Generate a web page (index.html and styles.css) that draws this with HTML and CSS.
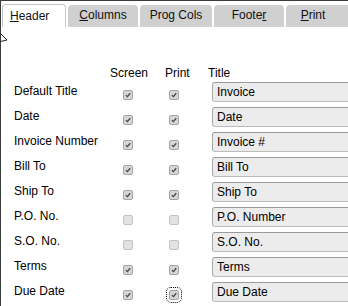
FILE: index.html
```html
<!DOCTYPE html>
<html>
<head>
<meta charset="utf-8">
<link rel="stylesheet" href="styles.css">
</head>
<body>
<div class="window">
  <div class="tabs">
    <div class="tab active"><u>H</u>eader</div>
    <div class="tab w70"><u>C</u>olumns</div>
    <div class="tab w72">Prog Cols</div>
    <div class="tab w70">Foote<u>r</u></div>
    <div class="tab grow"><u>P</u>rint</div>
  </div>
  <svg class="cursor" width="9" height="10" viewBox="0 0 9 10"><polygon points="0.5,0.5 7,7 0.5,8.5" fill="#fff" stroke="#222" stroke-width="1"/></svg>
  <div class="head">
    <span class="h-screen">Screen</span>
    <span class="h-print">Print</span>
    <span>Title</span>
  </div>
  <div class="rows">
    <div class="row"><span class="label">Default Title</span><span class="cb on"><svg viewBox="0 0 10 10"><path d="M2.3 5.2 L4.2 7 L7.8 2.8"/></svg></span><span class="cb on p"><svg viewBox="0 0 10 10"><path d="M2.3 5.2 L4.2 7 L7.8 2.8"/></svg></span><span class="field">Invoice</span></div>
    <div class="row"><span class="label">Date</span><span class="cb on"><svg viewBox="0 0 10 10"><path d="M2.3 5.2 L4.2 7 L7.8 2.8"/></svg></span><span class="cb on p"><svg viewBox="0 0 10 10"><path d="M2.3 5.2 L4.2 7 L7.8 2.8"/></svg></span><span class="field">Date</span></div>
    <div class="row"><span class="label">Invoice Number</span><span class="cb on"><svg viewBox="0 0 10 10"><path d="M2.3 5.2 L4.2 7 L7.8 2.8"/></svg></span><span class="cb on p"><svg viewBox="0 0 10 10"><path d="M2.3 5.2 L4.2 7 L7.8 2.8"/></svg></span><span class="field">Invoice #</span></div>
    <div class="row"><span class="label">Bill To</span><span class="cb on"><svg viewBox="0 0 10 10"><path d="M2.3 5.2 L4.2 7 L7.8 2.8"/></svg></span><span class="cb on p"><svg viewBox="0 0 10 10"><path d="M2.3 5.2 L4.2 7 L7.8 2.8"/></svg></span><span class="field">Bill To</span></div>
    <div class="row"><span class="label">Ship To</span><span class="cb on"><svg viewBox="0 0 10 10"><path d="M2.3 5.2 L4.2 7 L7.8 2.8"/></svg></span><span class="cb on p"><svg viewBox="0 0 10 10"><path d="M2.3 5.2 L4.2 7 L7.8 2.8"/></svg></span><span class="field">Ship To</span></div>
    <div class="row"><span class="label">P.O. No.</span><span class="cb"></span><span class="cb p"></span><span class="field">P.O. Number</span></div>
    <div class="row"><span class="label">S.O. No.</span><span class="cb"></span><span class="cb p"></span><span class="field">S.O. No.</span></div>
    <div class="row"><span class="label">Terms</span><span class="cb on"><svg viewBox="0 0 10 10"><path d="M2.3 5.2 L4.2 7 L7.8 2.8"/></svg></span><span class="cb on p"><svg viewBox="0 0 10 10"><path d="M2.3 5.2 L4.2 7 L7.8 2.8"/></svg></span><span class="field">Terms</span></div>
    <div class="row"><span class="label">Due Date</span><span class="cb on"><svg viewBox="0 0 10 10"><path d="M2.3 5.2 L4.2 7 L7.8 2.8"/></svg></span><span class="cb on p focus"><svg viewBox="0 0 10 10"><path d="M2.3 5.2 L4.2 7 L7.8 2.8"/></svg></span><span class="field">Due Date</span></div>
  </div>
</div>
</body>
</html>
```

FILE: styles.css
```css
html, body {
  margin: 0;
  padding: 0;
  background: #fff;
}
body {
  width: 348px;
  height: 306px;
  overflow: hidden;
  font-family: "Liberation Sans", Arial, sans-serif;
  font-size: 12px;
  color: #000;
}
.window {
  position: relative;
  box-sizing: border-box;
  width: 348px;
  height: 306px;
  overflow: hidden;
  border-top: 1px solid #3c3c3c;
  border-left: 1px solid #3c3c3c;
}
.tabs {
  display: flex;
  align-items: flex-end;
  gap: 2px;
  height: 26px;
  padding-left: 1px;
  white-space: nowrap;
}
.tab {
  flex: none;
  box-sizing: border-box;
  height: 22px;
  line-height: 21px;
  text-align: center;
  color: #111;
  background: #d0d0d0;
  border-radius: 4px 4px 0 0;
}
.tab.active {
  width: 64px;
  height: 23px;
  line-height: 22px;
  background: #fff;
  border: 1px solid #c4c4c4;
  border-bottom: none;
  text-align: left;
  padding-left: 7px;
}
.w70 { width: 70px; }
.w72 { width: 72px; }
.tab.grow {
  flex: 1;
  padding-right: 8px;
  border-radius: 4px 0 0 0;
}
.tab u { text-decoration-thickness: 1px; text-underline-offset: 1px; }
.cursor {
  position: absolute;
  left: -1px;
  top: 32px;
}
.head {
  display: flex;
  margin-top: 38px;
  padding-left: 109px;
  height: 16px;
  line-height: 16px;
}
.h-screen { width: 55px; }
.h-print { width: 43px; }
.rows {
  display: flex;
  flex-direction: column;
  gap: 5px;
  margin-top: 1px;
}
.row {
  display: flex;
  align-items: center;
  height: 20px;
  padding-left: 13px;
  white-space: nowrap;
}
.label {
  flex: none;
  width: 109px;
  margin-top: -2px;
}
.cb {
  flex: none;
  box-sizing: border-box;
  width: 10px;
  height: 10px;
  align-self: flex-start;
  margin-top: 8px;
  margin-right: 36px;
  background: #e2e2e2;
  border: 1px solid #c2c2c2;
  border-radius: 2px;
  display: flex;
}
.cb.on {
  background: #d6d6d6;
  border-color: #a4a4a4;
}
.cb.p { margin-right: 33px; }
.cb svg {
  width: 8px;
  height: 8px;
}
.cb svg path {
  fill: none;
  stroke: #444;
  stroke-width: 1.6;
}
.cb.focus {
  outline: 1px dotted #000;
  outline-offset: 2px;
}
.field {
  flex: 1;
  min-width: 0;
  box-sizing: border-box;
  height: 20px;
  line-height: 18px;
  padding-left: 4px;
  background: #ececec;
  border: 1px solid #bcbcbc;
  border-right: none;
  border-top-color: #9a9a9a;
  border-left-color: #a8a8a8;
  border-radius: 3px 0 0 3px;
}
```
